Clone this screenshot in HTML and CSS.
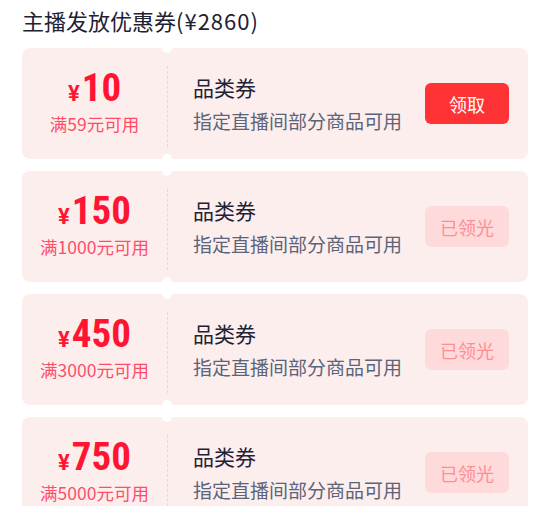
FILE: index.html
```html
<!DOCTYPE html>
<html lang="zh-CN">
<head>
    <meta charset="UTF-8">
    <meta name="viewport" content="width=device-width, initial-scale=1.0">
    <title>主播发放优惠券</title>
    <link rel="stylesheet" href="styles.css">
</head>
<body>
    <div class="page">
        <h1 class="title">主播发放优惠券<span class="total">(¥2860)</span></h1>

        <div class="coupon-list">
            <!-- 优惠券 1 -->
            <div class="coupon">
                <div class="coupon-left">
                    <div class="amount"><span class="yen">¥</span>10</div>
                    <div class="limit">满59元可用</div>
                </div>
                <div class="coupon-right">
                    <div class="desc">
                        <div class="name">品类券</div>
                        <div class="scope">指定直播间部分商品可用</div>
                    </div>
                    <div class="btn">领取</div>
                </div>
            </div>

            <!-- 优惠券 2 -->
            <div class="coupon">
                <div class="coupon-left">
                    <div class="amount"><span class="yen">¥</span>150</div>
                    <div class="limit">满1000元可用</div>
                </div>
                <div class="coupon-right">
                    <div class="desc">
                        <div class="name">品类券</div>
                        <div class="scope">指定直播间部分商品可用</div>
                    </div>
                    <div class="btn disabled">已领光</div>
                </div>
            </div>

            <!-- 优惠券 3 -->
            <div class="coupon">
                <div class="coupon-left">
                    <div class="amount"><span class="yen">¥</span>450</div>
                    <div class="limit">满3000元可用</div>
                </div>
                <div class="coupon-right">
                    <div class="desc">
                        <div class="name">品类券</div>
                        <div class="scope">指定直播间部分商品可用</div>
                    </div>
                    <div class="btn disabled">已领光</div>
                </div>
            </div>

            <!-- 优惠券 4 -->
            <div class="coupon">
                <div class="coupon-left">
                    <div class="amount"><span class="yen">¥</span>750</div>
                    <div class="limit">满5000元可用</div>
                </div>
                <div class="coupon-right">
                    <div class="desc">
                        <div class="name">品类券</div>
                        <div class="scope">指定直播间部分商品可用</div>
                    </div>
                    <div class="btn disabled">已领光</div>
                </div>
            </div>
        </div>
    </div>
</body>
</html>
```

FILE: styles.css
```css
/* 全局 */
body, html {
    margin: 0;
    padding: 0;
    background: #ffffff;
    font-family: 'Noto Sans CJK SC', 'Noto Sans', sans-serif;
    overflow: hidden;
}

.page {
    padding: 6px 22px 0 22px;
}

/* 标题 */
.title {
    margin: 0;
    font-size: 22px;
    font-weight: normal;
    line-height: 28px;
    color: #1e2233;
}

.total {
    letter-spacing: 1px;
}

/* 券列表 */
.coupon-list {
    display: flex;
    flex-direction: column;
    gap: 12px;
    margin-top: 14px;
}

.coupon {
    position: relative;
    display: flex;
    height: 111px;
    width: 506px;
    background: #fdeeee;
    border-radius: 8px;
}

/* 左侧金额 */
.coupon-left {
    position: relative;
    width: 145px;
    display: flex;
    flex-direction: column;
    align-items: center;
    justify-content: center;
    padding-bottom: 4px;
}

/* 上下缺口 */
.coupon-left::before,
.coupon-left::after {
    content: '';
    position: absolute;
    right: -5px;
    width: 10px;
    height: 10px;
    border-radius: 50%;
    background: #ffffff;
}

.coupon-left::before {
    top: -5px;
}

.coupon-left::after {
    bottom: -5px;
}

.amount {
    font-family: 'Liberation Sans Narrow', 'Roboto Condensed', 'Roboto', sans-serif;
    font-weight: bold;
    font-size: 39px;
    line-height: 38px;
    color: #ff1433;
}

.yen {
    font-family: 'Roboto', sans-serif;
    font-size: 22px;
    margin-right: 2px;
}

.limit {
    font-size: 17.5px;
    line-height: 22px;
    color: #ff4d69;
}

/* 右侧说明 */
.coupon-right {
    position: relative;
    flex: 1;
    display: flex;
    align-items: center;
    justify-content: space-between;
    padding: 0 19px 0 26px;
}

/* 虚线分隔 */
.coupon-right::before {
    content: '';
    position: absolute;
    left: 0;
    top: 18px;
    bottom: 12px;
    border-left: 1px dashed #f7cfd6;
}

.desc {
    display: flex;
    flex-direction: column;
    gap: 8px;
    margin-top: -2px;
}

.name {
    font-size: 21px;
    line-height: 28px;
    color: #1e2233;
}

.scope {
    font-size: 19px;
    line-height: 24px;
    color: #5b6478;
}

/* 按钮 */
.btn {
    width: 84px;
    height: 41px;
    border-radius: 6px;
    background: #ff3335;
    color: #ffffff;
    font-size: 18px;
    display: flex;
    align-items: center;
    justify-content: center;
}

.btn.disabled {
    background: #ffdadb;
    color: #ff8e94;
}
```
